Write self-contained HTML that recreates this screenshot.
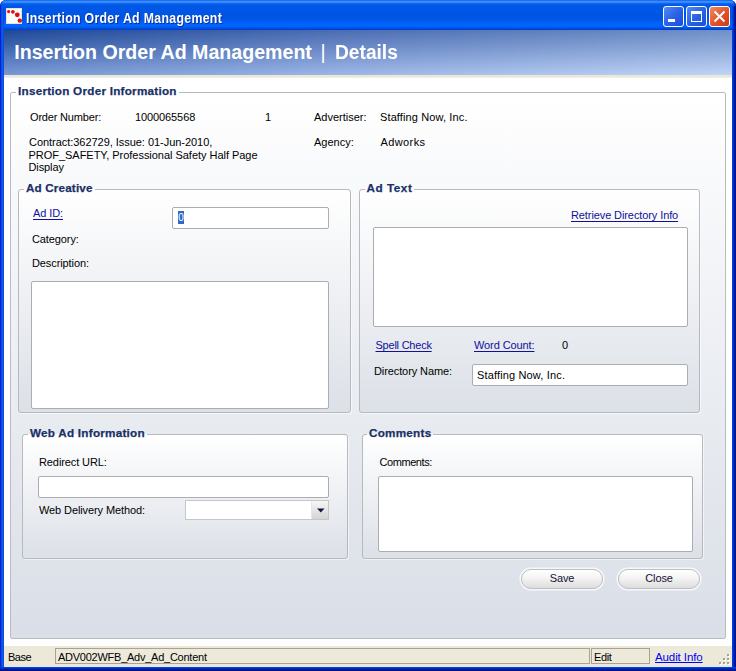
<!DOCTYPE html>
<html><head><meta charset="utf-8">
<style>
*{box-sizing:border-box;margin:0;padding:0}
html,body{width:736px;height:671px;overflow:hidden;background:#fff}
body{position:relative;font-family:"Liberation Sans",sans-serif;font-size:11px;color:#000}
.a{position:absolute;white-space:nowrap;line-height:13px;letter-spacing:-.1px}
#tb{position:absolute;left:0;top:0;width:736px;height:30px;border-radius:6px 6px 0 0;box-shadow:inset 1px 0 0 #0A2ECC,inset -1px 0 0 #0020A8;
 background:linear-gradient(to bottom,#0A3FD6 0px,#3D93FF 1px,#2F86FF 2.5px,#0B69EE 3.5px,#0058E6 5px,#0054E3 19px,#0060F5 22px,#0066FF 26px,#0054E6 28px,#0038C8 30px)}
#lb{position:absolute;left:0;top:6px;width:4px;height:665px;background:linear-gradient(to right,#0010C8,#0A35D8 1px,#2060F0 2px,#0050E0 3px,#0050E0 4px)}
#rb{position:absolute;left:732px;top:6px;width:4px;height:665px;background:linear-gradient(to right,#0040F0,#0038E0 1px,#0020B0 2px,#001080 4px)}
#bb{position:absolute;left:0;top:667px;width:736px;height:4px;background:linear-gradient(to bottom,#0040FF,#0038E0 1px,#0020A0 2px,#001080 4px)}
#hdr{position:absolute;left:4px;top:30px;width:728px;height:45px;background:linear-gradient(to right,#1E4898,#4A6CB2 45%,#7090C8)}
#hdr2{position:absolute;left:4px;top:30px;width:728px;height:45px;background:linear-gradient(to right,#7898D4,#9CB6E6 45%,#C0D4F6);-webkit-mask-image:linear-gradient(to bottom,transparent,#000);mask-image:linear-gradient(to bottom,transparent,#000)}
#bl1{position:absolute;left:4px;top:75px;width:728px;height:1px;background:#E4ECD6}
#bl2{position:absolute;left:4px;top:76px;width:728px;height:1px;background:#EDE6D6}
#bl3{position:absolute;left:4px;top:77px;width:728px;height:1px;background:#F3EEE4}
.ttl{color:#fff;font-weight:bold;font-size:14px;letter-spacing:.35px;text-shadow:1px 1px 0 #0A2A90;transform:scaleX(.88);transform-origin:0 0}
.hd{color:#fff;font-weight:bold;font-size:19.6px;line-height:22px}
.wb{position:absolute;top:6px;width:21px;height:21px;border:1px solid #fff;border-radius:3px}
#panel{position:absolute;left:10px;top:92px;width:716px;height:547px;border:1px solid #B8BBC0;border-radius:2px;
 background:linear-gradient(to bottom,#FFFFFF 0%,#F0F2F6 38%,#E8EBF0 60%,#DCE0E8 93%,#DADEE6 100%)}
.grp{position:absolute;border:1px solid #B6B9BD;border-radius:3px;box-shadow:1px 1px 0 rgba(255,255,255,.55);background:linear-gradient(to bottom,#FFFFFF 0%,#DCE0E7 100%)}
.gt{position:absolute;white-space:nowrap;font-weight:bold;-webkit-text-stroke:.25px #1A3068;font-size:11.7px;letter-spacing:.25px;color:#1A3068;line-height:13px;padding:0 2px}
.inp{position:absolute;background:#fff;border:1px solid #ABADB0;border-radius:2px}
.lnk{color:#10109C;text-decoration:underline;text-underline-offset:2px}
.btn{position:absolute;border:1px solid #BDBFC3;border-radius:10px;background:linear-gradient(to bottom,#FFFFFF 0%,#F4F4F4 45%,#DDDDDD 100%);box-shadow:0 0 0 1.5px #F6F7FA;text-align:center;color:#141432;line-height:17px;letter-spacing:-.1px}
#sb{position:absolute;left:4px;top:646px;width:728px;height:21px;background:#ECE9D8}
.sf{position:absolute;top:648px;height:16px;border:1px solid #A7A38E;background:#EDEADC}
</style></head><body>
<div id="tb"></div>
<div id="lb"></div><div id="rb"></div><div id="bb"></div>
<!-- title icon -->
<svg style="position:absolute;left:6px;top:8px" width="16" height="16" viewBox="0 0 16 16">
<rect x="0" y="0" width="16" height="16" fill="#FBFBFA"/>
<rect x="0.5" y="0.5" width="15" height="15" fill="none" stroke="#E6E0DA"/>
<circle cx="2.6" cy="3.6" r="1.6" fill="#E01010"/>
<circle cx="6.9" cy="3.8" r="1.9" fill="#E01010"/>
<circle cx="11.3" cy="6.8" r="2.4" fill="#D81010"/>
<circle cx="13.8" cy="12.6" r="2.2" fill="#D81010"/>
</svg>
<div class="a ttl" style="left:26.3px;top:9.5px;line-height:16px">Insertion Order Ad Management</div>
<div class="wb" style="left:663px;background:linear-gradient(135deg,#4F8CF7 0%,#2A63E6 50%,#1C4CD8 100%)"><div style="position:absolute;left:4px;top:12px;width:7px;height:3px;background:#fff"></div></div>
<div class="wb" style="left:686px;background:linear-gradient(135deg,#4F8CF7 0%,#2A63E6 50%,#1C4CD8 100%)"><div style="position:absolute;left:4px;top:4px;width:11px;height:11px;border:1px solid #fff;border-top-width:3px"></div></div>
<div class="wb" style="left:709px;background:linear-gradient(135deg,#F08A60 0%,#E2522A 55%,#C83C14 100%)">
<svg style="position:absolute;left:0;top:0" width="19" height="19" viewBox="0 0 19 19"><path d="M4.5 4.5 L14.5 14.5 M14.5 4.5 L4.5 14.5" stroke="#fff" stroke-width="2"/></svg></div>

<div id="hdr"></div><div id="hdr2"></div><div id="bl1"></div><div id="bl2"></div><div id="bl3"></div>
<div class="a hd" style="left:14.3px;top:41px;letter-spacing:0">Insertion Order Ad Management</div>
<div class="a hd" style="left:320.5px;top:41px;font-weight:normal">|</div>
<div class="a hd" style="left:335px;top:41px;letter-spacing:0;transform:scaleX(.978);transform-origin:0 0">Details</div>

<div id="panel"></div>
<div class="gt" style="left:16px;top:84px;background:#fff">Insertion Order Information</div>

<div class="a" style="left:30px;top:111px;letter-spacing:-.18px">Order Number:</div>
<div class="a" style="left:135px;top:111px">1000065568</div>
<div class="a" style="left:265px;top:111px">1</div>
<div class="a" style="left:314px;top:111px;letter-spacing:0">Advertiser:</div>
<div class="a" style="left:380px;top:111px;letter-spacing:.12px">Staffing Now, Inc.</div>
<div class="a" style="left:29px;top:136px;letter-spacing:-.04px">Contract:362729, Issue: 01-Jun-2010,</div>
<div class="a" style="left:28.5px;top:149px;letter-spacing:-.03px">PROF_SAFETY, Professional Safety Half Page</div>
<div class="a" style="left:28.5px;top:161px">Display</div>
<div class="a" style="left:314px;top:136px;letter-spacing:0">Agency:</div>
<div class="a" style="left:380.5px;top:136px;letter-spacing:.4px">Adworks</div>

<!-- Ad Creative -->
<div class="grp" style="left:18px;top:189px;width:333px;height:224px"></div>
<div class="gt" style="left:24px;top:181px;letter-spacing:.15px;background:linear-gradient(to bottom,#F8F9FB 8px,#fff 8px)">Ad Creative</div>
<div class="a lnk" style="left:33px;top:207px">Ad ID:</div>
<div class="inp" style="left:172px;top:207px;width:157px;height:22px"><span style="position:absolute;left:5px;top:3px;width:6px;height:13px;background:#316AC5;color:#fff;line-height:13px;font-size:10px;text-align:center">0</span></div>
<div class="a" style="left:32px;top:233px">Category:</div>
<div class="a" style="left:32px;top:257px">Description:</div>
<div class="inp" style="left:31px;top:281px;width:298px;height:128px"></div>

<!-- Ad Text -->
<div class="grp" style="left:359px;top:189px;width:341px;height:224px"></div>
<div class="gt" style="left:364.5px;top:181px;letter-spacing:.55px;background:linear-gradient(to bottom,#F8F9FB 8px,#fff 8px)">Ad Text</div>
<div class="a lnk" style="left:571px;top:209px">Retrieve Directory Info</div>
<div class="inp" style="left:373px;top:227px;width:315px;height:100px"></div>
<div class="a lnk" style="left:375.5px;top:339px;letter-spacing:-.23px">Spell Check</div>
<div class="a lnk" style="left:474px;top:339px">Word Count:</div>
<div class="a" style="left:562px;top:339px">0</div>
<div class="a" style="left:374px;top:365px">Directory Name:</div>
<div class="inp" style="left:472px;top:364px;width:216px;height:22px"><span class="a" style="left:4px;top:4px;letter-spacing:.15px">Staffing Now, Inc.</span></div>

<!-- Web Ad Information -->
<div class="grp" style="left:22px;top:434px;width:326px;height:125px"></div>
<div class="gt" style="left:28px;top:426px;background:linear-gradient(to bottom,#E7EAEF 8px,#fff 8px)">Web Ad Information</div>
<div class="a" style="left:39px;top:456px">Redirect URL:</div>
<div class="inp" style="left:38px;top:476px;width:291px;height:22px"></div>
<div class="a" style="left:39px;top:504px">Web Delivery Method:</div>
<div class="inp" style="left:185px;top:500px;width:144px;height:20px;border-radius:0;border-color:#C4C6CA">
 <div style="position:absolute;right:0;top:0;width:17px;height:18px;background:linear-gradient(to bottom,#F6F6F6,#D4D4D4);border-left:1px solid #E6E6E6">
 <svg style="position:absolute;left:4.8px;top:7px" width="8" height="5" viewBox="0 0 8 5"><path d="M0 0.5 H7.5 L3.75 4.5 Z" fill="#0A1A3C"/></svg></div>
</div>

<!-- Comments -->
<div class="grp" style="left:362px;top:434px;width:341px;height:125px"></div>
<div class="gt" style="left:367px;top:426px;background:linear-gradient(to bottom,#E7EAEF 8px,#fff 8px)">Comments</div>
<div class="a" style="left:379.5px;top:456px;letter-spacing:-.43px">Comments:</div>
<div class="inp" style="left:378px;top:476px;width:315px;height:76px"></div>

<div class="btn" style="left:521px;top:569px;width:82px;height:20px">Save</div>
<div class="btn" style="left:618px;top:569px;width:82px;height:20px">Close</div>

<!-- status bar -->
<div id="sb"></div>
<div class="a" style="left:8px;top:651px;letter-spacing:-.5px">Base</div>
<div class="sf" style="left:55px;width:535px"></div>
<div class="a" style="left:58px;top:651px;letter-spacing:-.25px">ADV002WFB_Adv_Ad_Content</div>
<div class="sf" style="left:591px;width:59px"></div>
<div class="a" style="left:594px;top:651px;letter-spacing:-.4px">Edit</div>
<div class="a" style="left:655px;top:651px;color:#0000FF;text-decoration:underline;font-size:11.5px">Audit Info</div>
<svg style="position:absolute;left:716px;top:652px" width="14" height="13" viewBox="0 0 14 13">
<g fill="#fff"><rect x="12" y="3" width="2" height="2"/><rect x="8" y="7" width="2" height="2"/><rect x="12" y="7" width="2" height="2"/><rect x="4" y="11" width="2" height="2"/><rect x="8" y="11" width="2" height="2"/><rect x="12" y="11" width="2" height="2"/></g>
<g fill="#A5A295"><rect x="11" y="2" width="2" height="2"/><rect x="7" y="6" width="2" height="2"/><rect x="11" y="6" width="2" height="2"/><rect x="3" y="10" width="2" height="2"/><rect x="7" y="10" width="2" height="2"/><rect x="11" y="10" width="2" height="2"/></g>
</svg>
</body></html>
